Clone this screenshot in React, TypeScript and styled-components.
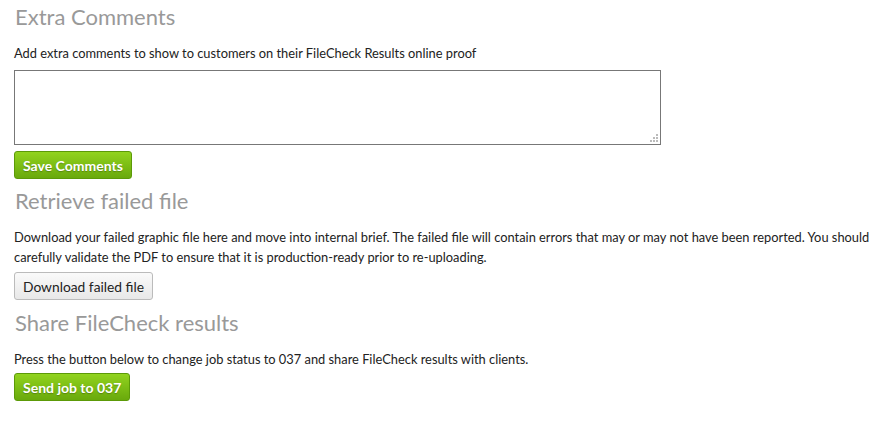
import React from "react";
import styled, { createGlobalStyle } from "styled-components";

const Global = createGlobalStyle`
  body { margin: 0; background: #fff; font-family: Lato, "Open Sans", sans-serif; color: #333; }
`;

const Page = styled.div`
  padding: 2px 14px 0 14px;
  display: flex;
  flex-direction: column;
  align-items: flex-start;
`;

const Heading = styled.h3<{ $top?: number }>`
  margin: ${(p) => p.$top ?? 0}px 0 0 1px;
  font-size: 22px;
  font-weight: 400;
  line-height: 30px;
  color: #999;
`;

const Text = styled.p`
  margin: 11px 0 0 0;
  font-size: 12.85px;
  line-height: 20px;
  color: #222;
  max-width: 868px;
`;

const BoxWrap = styled.div`
  position: relative;
  margin-top: 7px;
  width: 647px;
  height: 75px;
`;

const CommentBox = styled.textarea`
  width: 100%;
  height: 100%;
  box-sizing: border-box;
  border: 1px solid #777;
  border-radius: 0;
  font-family: Lato, sans-serif;
  font-size: 13px;
  resize: none;
  display: block;
  outline: none;
`;

const Grip = styled.svg`
  position: absolute;
  right: 3px;
  bottom: 3px;
  pointer-events: none;
`;

const GreenButton = styled.button<{ $top?: number }>`
  margin-top: ${(p) => p.$top ?? 6}px;
  height: 28px;
  padding: 0 8px;
  box-sizing: border-box;
  border: 1px solid #5c9a08;
  border-radius: 3px;
  background: linear-gradient(#91d31e, #69a90c);
  color: #fff;
  font-family: Lato, sans-serif;
  font-weight: 700;
  font-size: 14px;
  text-shadow: 0 1px 1px rgba(0, 0, 0, 0.25);
  cursor: pointer;
`;

const GreyButton = styled.button`
  margin-top: 5px;
  height: 28px;
  padding: 0 8px;
  box-sizing: border-box;
  border: 1px solid #bbb;
  border-radius: 3px;
  background: linear-gradient(#fafafa, #e8e8e8);
  color: #222;
  font-family: Lato, sans-serif;
  font-size: 13.8px;
  cursor: pointer;
`;

export default function App() {
  return (
    <>
      <Global />
      <Page>
        <Heading>Extra Comments</Heading>
        <Text>Add extra comments to show to customers on their FileCheck Results online proof</Text>
        <BoxWrap>
          <CommentBox />
          <Grip width="8" height="8" viewBox="0 0 8 8">
            <g fill="#bbb">
              <rect x="6" y="0" width="2" height="2" />
              <rect x="3" y="3" width="2" height="2" />
              <rect x="6" y="3" width="2" height="2" />
              <rect x="0" y="6" width="2" height="2" />
              <rect x="3" y="6" width="2" height="2" />
              <rect x="6" y="6" width="2" height="2" />
            </g>
          </Grip>
        </BoxWrap>
        <GreenButton>Save Comments</GreenButton>
        <Heading $top={7}>Retrieve failed file</Heading>
        <Text>
          Download your failed graphic file here and move into internal brief. The failed file will contain errors that may or may not have been reported. You should carefully validate the PDF to ensure that it is production-ready prior to re-uploading.
        </Text>
        <GreyButton>Download failed file</GreyButton>
        <Heading $top={8}>Share FileCheck results</Heading>
        <Text>Press the button below to change job status to 037 and share FileCheck results with clients.</Text>
        <GreenButton $top={4}>Send job to 037</GreenButton>
      </Page>
    </>
  );
}
